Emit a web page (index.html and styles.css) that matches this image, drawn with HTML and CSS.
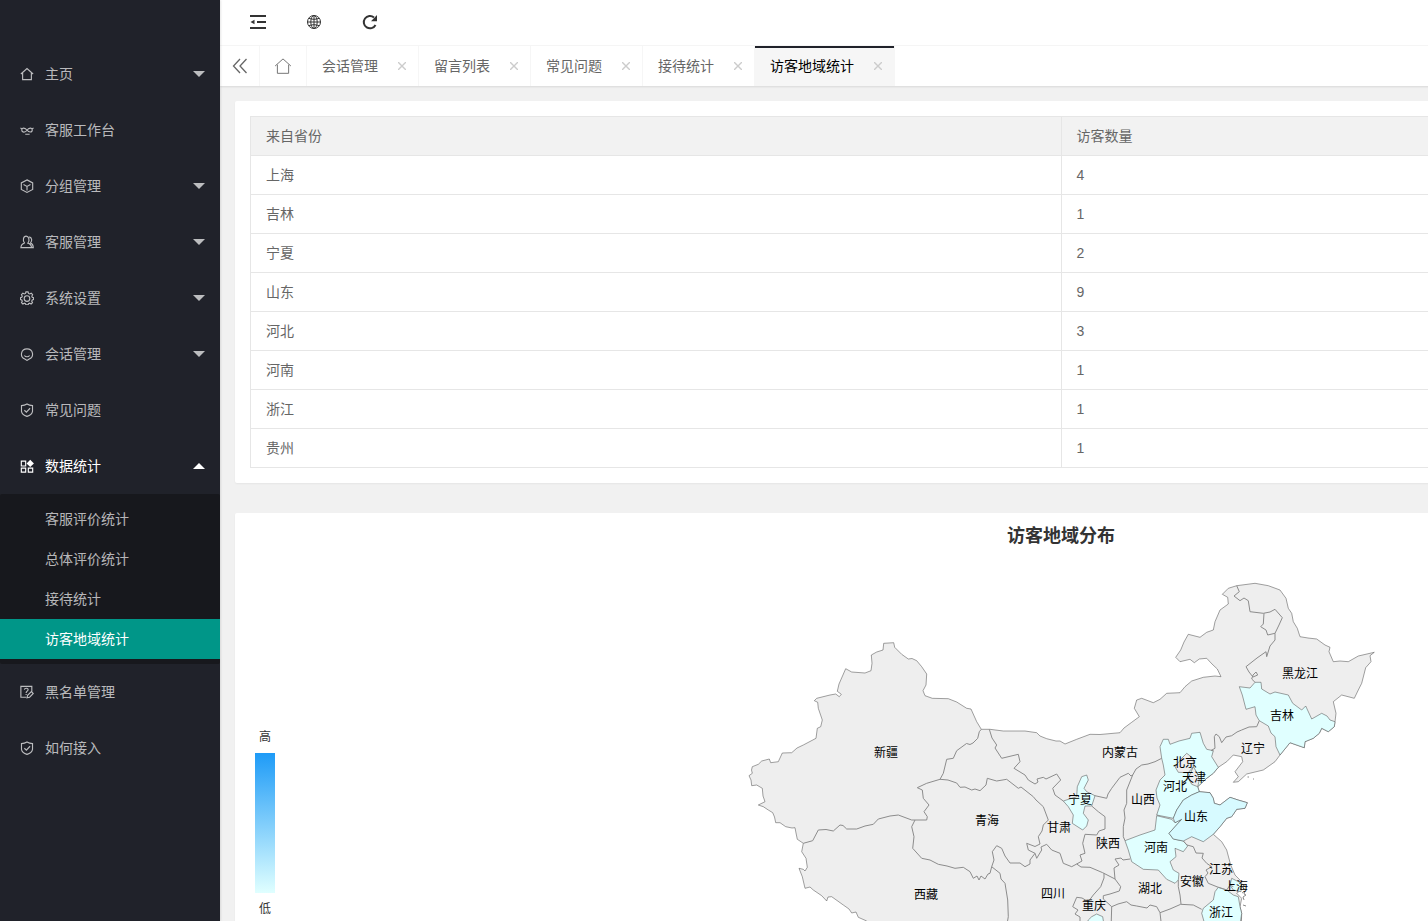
FILE: index.html
```html
<!DOCTYPE html>
<html lang="zh-CN">
<head>
<meta charset="utf-8">
<title>访客地域统计</title>
<link rel="stylesheet" href="styles.css">
</head>
<body>
<svg class="sprite" aria-hidden="true">
  <symbol id="i-home" viewBox="0 0 16 16"><path d="M1 8 8 1.700 15 8M3 6.800V14.500h10V6.800"/></symbol>
  <symbol id="i-mask" viewBox="0 0 16 16"><path d="M.5 5.800 2 6.500M15.500 5.800 14 6.500M8 8.300C6 5.300 2 5 2 8s4 3.300 6 .3c2-3 6-3.300 6-.3s-4 3-6 0M6 12.800h5"/></symbol>
  <symbol id="i-cube" viewBox="0 0 16 16"><path d="M8 1l6.500 3.500v7.500L8 15.300 1.500 12V4.500zM4 6.300 8 8.500l4-2.200M8 8.500v4.700"/></symbol>
  <symbol id="i-user" viewBox="0 0 16 16"><path d="M5.300 9.300C2.500 6 4 1.300 7 1.300s4.600 4.500 2 8c3 .8 4 2 4.200 5.200H1c.2-3.200 1.300-4.500 4.300-5.200M10.500 2.200c3.300.8 3.600 4.300 1.600 6.900 2.200.8 3 2.400 3.100 5.400h-2"/></symbol>
  <symbol id="i-gear" viewBox="0 0 16 16"><path d="M6.800 1h2.400l.5 1.800 1.400.6 1.700-.9 1.600 1.700-.9 1.700.5 1.300 1.500.5v2l-1.500.6-.6 1.300.9 1.700-1.600 1.500-1.600-.8-1.400.6-.5 1.300H6.800l-.5-1.300-1.400-.6-1.600.8-1.600-1.500.9-1.700L2 10.300.5 9.700v-2L2 7.200l.6-1.300-.9-1.700 1.600-1.700 1.600.9 1.400-.6z"/><circle cx="8" cy="8.600" r="3.200"/></symbol>
  <symbol id="i-chat" viewBox="0 0 16 16"><path d="M5.500 13.700C-.5 11.300.8 2.200 8 2.200s8.500 9 2.500 11.500L8 15.300zM5 9.700c1.500 2 4.500 2 6 0"/></symbol>
  <symbol id="i-shield" viewBox="0 0 16 16"><path d="M8 1.200c2 1.300 4 1.800 6.300 1.800v6.500c-.4 2.800-3.300 4.800-6.300 5.800-3-1-5.900-3-6.300-5.800V3C4 3 6 2.500 8 1.200zM5 8.300l2.300 2.200L11.500 6"/></symbol>
  <symbol id="i-apps" viewBox="0 0 16 16"><path d="M1.500 2.500h5V8h-5zM1.500 10.500h5V15h-5zM9.500 10.500h5V15h-5z"/><path class="solid" d="M11.700.8 15.900 5l-4.200 4.200L7.500 5z"/></symbol>
  <symbol id="i-note" viewBox="0 0 16 16"><path d="M7 14H1V1.500h12.500v6M5 5.200c.3-2 4.500-2 4.200.3C9 7 7 7 7 9M7 10.300v1.200M8 14.700l.7-3L13 7.500l2.200 2.200L11 14z"/></symbol>
</svg>
<div class="app">
  <nav class="side" aria-label="主导航">
    <ul class="menu">
      <li><a class="item" href="#"><svg class="ico"><use href="#i-home"/></svg><span>主页</span><i class="caret"></i></a></li>
      <li><a class="item" href="#"><svg class="ico"><use href="#i-mask"/></svg><span>客服工作台</span></a></li>
      <li><a class="item" href="#"><svg class="ico"><use href="#i-cube"/></svg><span>分组管理</span><i class="caret"></i></a></li>
      <li><a class="item" href="#"><svg class="ico"><use href="#i-user"/></svg><span>客服管理</span><i class="caret"></i></a></li>
      <li><a class="item" href="#"><svg class="ico"><use href="#i-gear"/></svg><span>系统设置</span><i class="caret"></i></a></li>
      <li><a class="item" href="#"><svg class="ico"><use href="#i-chat"/></svg><span>会话管理</span><i class="caret"></i></a></li>
      <li><a class="item" href="#"><svg class="ico"><use href="#i-shield"/></svg><span>常见问题</span></a></li>
      <li>
        <a class="item open" href="#"><svg class="ico"><use href="#i-apps"/></svg><span>数据统计</span><i class="caret up"></i></a>
        <ul class="submenu">
          <li><a class="subitem" href="#">客服评价统计</a></li>
          <li><a class="subitem" href="#">总体评价统计</a></li>
          <li><a class="subitem" href="#">接待统计</a></li>
          <li><a class="subitem current" href="#" aria-current="page">访客地域统计</a></li>
        </ul>
      </li>
      <li><a class="item" href="#"><svg class="ico"><use href="#i-note"/></svg><span>黑名单管理</span></a></li>
      <li><a class="item" href="#"><svg class="ico"><use href="#i-shield"/></svg><span>如何接入</span></a></li>
    </ul>
  </nav>
  <div class="main">
    <header class="toolbar">
      <button class="tool" type="button" aria-label="收起菜单"><svg class="tool-ico" viewBox="0 0 16 16"><path class="thick" d="M0 2h16M7 8h9M0 14h16"/><path class="solid" d="M4.500 5.700v4.600L.5 8z"/></svg></button>
      <button class="tool" type="button" aria-label="前台"><svg class="tool-ico" viewBox="0 0 16 16"><circle cx="8" cy="8" r="6.500"/><ellipse cx="8" cy="8" rx="3.200" ry="6.500"/><path d="M8 1.500v13M1.500 8h13M2.800 4.300c3 1.300 7.400 1.300 10.400 0M2.800 11.700c3-1.300 7.400-1.300 10.400 0"/></svg></button>
      <button class="tool" type="button" aria-label="刷新"><svg class="tool-ico" viewBox="0 0 16 16"><path class="thick" d="M13.500 11A6.200 6.200 0 1 1 12 3.400"/><path class="solid" d="M15 1v6.200H9z"/></svg></button>
    </header>
    <div class="tabs">
      <button class="tab-nav" type="button" aria-label="向左滚动"><svg class="tool-ico" viewBox="0 0 16 16"><path d="M8 1 1.500 8 8 15M14.500 1 8 8l6.500 7"/></svg></button>
      <a class="tab-home" href="#" aria-label="主页"><svg class="home-ico"><use href="#i-home"/></svg></a>
      <div class="tab"><a href="#">会话管理</a><button class="close" type="button" aria-label="关闭"><svg viewBox="0 0 8 8"><path d="M0 0l8 8M8 0 0 8"/></svg></button></div>
      <div class="tab"><a href="#">留言列表</a><button class="close" type="button" aria-label="关闭"><svg viewBox="0 0 8 8"><path d="M0 0l8 8M8 0 0 8"/></svg></button></div>
      <div class="tab"><a href="#">常见问题</a><button class="close" type="button" aria-label="关闭"><svg viewBox="0 0 8 8"><path d="M0 0l8 8M8 0 0 8"/></svg></button></div>
      <div class="tab"><a href="#">接待统计</a><button class="close" type="button" aria-label="关闭"><svg viewBox="0 0 8 8"><path d="M0 0l8 8M8 0 0 8"/></svg></button></div>
      <div class="tab active"><a href="#">访客地域统计</a><button class="close" type="button" aria-label="关闭"><svg viewBox="0 0 8 8"><path d="M0 0l8 8M8 0 0 8"/></svg></button></div>
    </div>
    <main class="content">
      <section class="card table-card">
        <table class="grid">
          <thead><tr><th scope="col">来自省份</th><th scope="col">访客数量</th></tr></thead>
          <tbody>
            <tr><td>上海</td><td>4</td></tr>
            <tr><td>吉林</td><td>1</td></tr>
            <tr><td>宁夏</td><td>2</td></tr>
            <tr><td>山东</td><td>9</td></tr>
            <tr><td>河北</td><td>3</td></tr>
            <tr><td>河南</td><td>1</td></tr>
            <tr><td>浙江</td><td>1</td></tr>
            <tr><td>贵州</td><td>1</td></tr>
          </tbody>
        </table>
      </section>
      <section class="card">
        <h2 class="chart-title">访客地域分布</h2>
        <div class="chart">
          <div class="legend"><span>高</span><div class="ramp"></div><span>低</span></div>
          <svg class="map" viewBox="285 559 1602 400" role="img" aria-label="访客地域分布地图">
            <path class="land" d="M803.3 843.3 797.300 839.300 796 833 795 827.700 792 828 785.700 826.700 780 822.700 775.700 822.700 774.500 817 772.700 812.700 768.300 810 763.300 806.700 758.300 805 765 801.700 763 796 762.300 788.300 756.700 785 751.700 785.700 751 780 749 775.700 752.300 773.300 751.500 770 752.300 766.700 758.300 764.300 761.700 761 769.300 759 770.700 762.700 778.300 761.700 782.300 753 791.700 752.700 797 748 803.300 745 816 738.300 817.300 728.300 820.700 726.700 822.300 720 818.300 708.300 817.700 702.300 814.300 700.700 816.700 698.300 830 695 835.700 694 839.300 696.700 841.300 694.300 837.300 691.300 839 684 845.700 668.700 851.700 672 865 673 871 670.700 872 663.300 871.300 655 876.700 652 883 650 883.700 643.300 893.700 642.700 894.700 647.300 901.700 654.300 908.300 659 912 658.500 916.700 660.700 921.700 666.700 926.700 674 926 685 923 690.700 925 695.700 932.300 698.300 948.300 698.700 956.700 702 966.700 708.300 971 709 976.700 721.700 981.300 729.300 990 729.300 1003.300 731 1025 731 1036.700 732.700 1040 736 1046.700 738.700 1056 741 1060 741 1065 744 1076.700 739.300 1090 734.300 1100 734.500 1120 732.700 1124 728 1131.700 722.300 1139.300 716.700 1134.300 708.300 1136.700 700 1141.700 698.300 1153.300 702.700 1160 699.300 1166.700 693.300 1180 692.700 1185 686.700 1191.700 681 1203.300 677.300 1215 676 1221 676.700 1217.300 669 1212 664 1206.700 658.300 1199.300 659 1194.300 662.700 1190 659.300 1180 661.700 1175.700 657.300 1180.700 650 1184 642 1188.300 634.300 1200 637.300 1206.700 632.300 1213.300 630 1215 621.700 1220 610 1228.300 604 1227.700 597.300 1222.300 594.300 1228.300 588.300 1236.700 585.700 1255 583.300 1268.300 585.700 1280 590 1286 598.300 1288.300 608.300 1291.700 613.300 1293.300 621.700 1297.300 628.300 1300 636.700 1308 638 1316.700 639 1325 645 1330 647.300 1329 651.700 1333.300 661.700 1340 661 1348.300 661.700 1358.300 656 1374.300 652.300 1370 655.700 1371 661.700 1365.700 667.700 1361.700 683.300 1358.300 690 1354.300 698.300 1341.700 695 1333.300 701.700 1336 713.300 1335 721.700 1334.300 726.700 1328.300 731.700 1321.700 728.300 1319.300 733.300 1313.300 738.300 1305 741.700 1304.300 747.700 1290 742.700 1280 755 1275 761.700 1263.300 770 1246.700 774 1238.300 781.700 1233.300 782.300 1238.300 776.700 1235 771.700 1242.700 761.700 1241.700 756.700 1233.300 755 1226.700 761.700 1218.300 767.300 1213.300 773.300 1206.700 778.300 1197.700 786.700 1199.300 791.700 1210 792.700 1213.300 798.300 1214.300 803.300 1220 805 1230 797.300 1238 800 1247.300 802.700 1245 808.300 1236.700 809.300 1231.700 816.700 1226.700 818.300 1220 826.700 1213.300 834.300 1221.700 841.700 1226.700 850 1230.700 865 1235 875 1241.700 881.700 1241 890 1236.700 893.300 1241.700 898.300 1240 906.700 1241.700 913.300 1240 960 900 960 866.700 921 858.300 917.300 856 912 851.700 913 849 909 843.300 905 831.700 896.700 828 897 826.700 901 821.700 895.700 813.300 890 810 887 805 888.300 802.300 876.700 799 868.300 803.300 869.300 805 871 807.300 867.300 806 858.300 801.700 851.700Z"/>
            <g class="tint">
              <path d="M1239.3 686.700 1250 688 1255 682.300 1261 682.300 1261.700 689 1270 694 1275 692 1288.300 695 1292.700 703.300 1301.700 710 1305.700 706 1311.700 719 1321.700 713.300 1327 716 1330 720 1335 721.700 1334.300 726.700 1328.300 731.700 1321.700 728.300 1319.300 733.300 1313.300 738.300 1305 741.700 1304.300 747.700 1290 742.700 1280 755 1276 746.700 1275 736.700 1271 733 1268.300 726 1259.300 720.700 1256 715 1255 706.700 1246 709.300 1242.300 695Z"/>
              <path d="M1063.3 801 1076.700 796.700 1077.300 786.700 1081.700 776.700 1086.700 775 1088.300 780 1084 788.300 1086.700 791.700 1095 795.700 1091.700 806 1085 806 1083.300 813.300 1088.300 820 1086.700 826 1082.700 830 1072.300 823.300 1073.300 815 1068.300 806.700Z"/>
              <path d="M1161.7 758.300 1160 746.700 1163.300 739.300 1168.300 739.300 1170 744.300 1179 741 1190 738.300 1191.700 733.300 1200 732.300 1203.300 743.300 1206.700 749.300 1213.300 750.700 1211.700 756.700 1218.300 767.300 1213.300 773.300 1206.700 778.300 1197.700 786.700 1199.300 791.700 1191.700 795 1183.300 800 1176.700 810 1173.300 818.300 1156.700 815 1160 805 1157 798 1156 790 1160 780 1165 775 1163.300 765Z"/>
              <path d="M1156.7 815.700 1171.700 819.300 1175 822.700 1181.700 819.300 1169 833.300 1173.300 839 1183.300 841 1187.700 846 1183.300 851.700 1175 848.300 1176 856.700 1170 861.700 1173.300 870 1179 873.300 1178.300 880 1175 883.300 1166.700 879.300 1158.300 870 1143.300 869.300 1131.700 861.700 1128.300 850 1125 840.700 1140 835 1155 830Z"/>
              <path d="M1218.3 887.300 1226.700 890 1233.300 895 1238.300 896.700 1240 906.700 1241.700 913.300 1240 925 1205 925 1201.700 913.300 1203.300 908.300 1213.300 900 1215 891.700Z"/>
              <path d="M1231.7 878.300 1237 881 1241.700 883.300 1241 891.700 1233.300 890 1230 885Z"/>
              <path d="M1086 925 1088.300 920 1091.700 916.700 1096.700 914 1102.700 916.700 1104 925Z"/>
              <path class="strong" d="M1173.3 818.300 1176.700 810 1183.300 800 1191.700 795 1199.300 791.700 1210 792.700 1213.300 798.300 1214.300 803.300 1220 805 1230 797.300 1238 800 1247.300 802.700 1245 808.300 1236.700 809.300 1231.700 816.700 1226.700 818.300 1220 826.700 1213.300 834.300 1203.300 841.700 1191.700 836.700 1183.300 841 1173.300 839 1169 833.300 1181.700 819.300 1175 822.700Z"/>
            </g>
            <path class="land" d="M1175 766.700 1181.700 758.300 1186.700 753.300 1193.300 758.300 1193.300 766.700 1188.300 772.700 1178.300 772.300ZM1193.300 766.700 1197.300 773.300 1199.300 780 1197.700 786.700 1191.700 784.300 1188.300 778.300 1191 772Z"/>
            <g class="border">
              <path d="M981.3 729.300 979.300 731.700 977.700 738.300 973 743 970 744.500 966.500 743.500 956.700 750.700 953.300 758.300 946.700 759.300 943.300 773.300 940 779.300 926.700 783.300 917.300 787.700 922.300 790 923.300 798.300 929 805 924 811.700 927.300 816.700 926.700 820 911.700 820 898.300 815 890 816 878.300 819 873.300 824.300 865 826 856.700 829 846.700 829 843 825.500 840 825 833.300 831 826 829.500 818.300 830 812.700 840.700 803.300 843.300"/>
              <path d="M915 820 911.700 826.700 914 836.700 912.700 848.300 921.700 858.300 930 860 938.300 864.300 947 866 955 868.300 963.300 867.300 970 871.700 973.300 878.300 977 876 979 880 981 876 985 879 988 874 990 873.300 991.700 866.700"/>
              <path d="M940 779.300 948 780 956.700 783 960 787.300 965 787 971.700 790 975 789 980 790.700 986 785 987.300 778.300 996.700 781 1006.700 779.300 1018.300 788.300 1021 787 1033.300 796.700 1036 800 1043.300 806.700 1048.300 820 1043.300 825 1042 831 1038.300 836.700 1040 844 1035 846.500 1026.700 843.300 1028.300 850 1035 853.300 1030 860 1030 864 1025 866.700 1020 863 1010 863 1005 856 1001.700 848.300 996.700 845.700 992.300 851.700 994 860 991.700 866.700 1000 873.300 1001 879 1005 883.300 1007.700 900 1008.300 916.700 1006 930"/>
              <path d="M1035 853.300 1036.700 858.300 1041.700 850 1041 847 1046.700 844.300 1051.700 850 1060 853.300 1063.300 863.300 1071.700 866.700 1076.700 864 1082 861 1080 855 1085 853.300 1082.700 843.300 1085 834.300 1096.700 835 1099 831 1105 829 1105 816.700 1098.300 811.700 1091.700 806"/>
              <path d="M1076.700 864 1081 867 1090 867.300 1102.700 872.700 1115 879 1120.700 886.700 1119.300 891 1110 894 1103.300 895.700 1103.300 899 1111.700 906.700 1111 930"/>
              <path d="M1104 873.300 1104 878 1100.700 886.700 1093.300 895 1088.300 901.700 1082 898 1076.700 897.300 1072.700 906.700 1078 910 1075 914 1080 917 1080 930M1130 859 1123 860 1121 858 1115 859 1119 865 1114 868 1115 879"/>
              <path d="M989.3 729.300 992 738 996.700 745 995 748 1001.700 758.300 1018.300 754.300 1020 761.700 1014 768.300 1025 775 1028.300 780 1035 784 1038 782 1037 779 1043.300 777.300 1046 779 1056.700 774 1060.700 780 1052.700 788.300 1055 795 1063.300 801"/>
              <path d="M1095 795.700 1106.700 798.300 1108 794 1111.700 788.300 1120 777.300 1128.300 773.300 1131 776 1132.700 775 1126.700 790 1126.700 803.300 1124 810 1125 818 1123.300 826.700 1123.300 836.700 1125 840.700"/>
              <path d="M1132.700 775 1136 769 1141.700 765 1148 764 1155 761.700 1161.700 758.300M1178.300 880 1178.300 886.700 1180 895 1181 904M1111.700 906.700 1118 904 1126.700 901.700 1131 905 1136.700 906 1147 908 1150 905 1156.700 906.700 1160 912.700 1170 909 1180.700 904.300 1193.300 905 1201.700 909.300M1160 912.700 1162 930"/>
              <path d="M1183.300 841 1187 845 1193.300 846.700 1196 853 1203.300 853.300 1202 858 1206.700 863.300 1211.700 866.700 1206 870 1208 873 1205 876.700 1208.300 883.300 1218.300 887.300 1226.700 890 1230 885 1233.300 886.700"/>
              <path d="M1259.300 720.700 1256.700 726.700 1249 727 1241.700 730 1237 732 1231.700 735.700 1226 737 1221.700 742.700 1219.300 736.700 1216 734 1214.300 736.700 1215 748.300 1211 750.500 1213.300 750.700"/>
              <path d="M1236.700 585.700 1239.300 591.700 1234 596 1240 600.700 1244 598 1248.300 600.700 1250 611.700 1263.300 613.300 1270 612 1275 609.300 1282.300 617.700 1279 625 1275 633.300 1275 640 1270 646 1266.700 656.700 1266 651.700 1257 658 1246 666.700 1249 672 1253 677 1257.700 675 1256 672 1253 675 1251.700 679 1255 682.300M1264 613.300 1263.300 624 1260.700 626.700 1266 630 1267.700 635 1275 633.300"/>
              <path d="M1247.500 777h1.500M1253 779h1M1242 893l3-2-1 3 2 1-3 2 1 3M1243 905l3 1"/>
            </g>
            <g class="labels">
              <text x="886" y="757">新疆</text><text x="926" y="899">西藏</text><text x="987" y="825">青海</text><text x="1059" y="832">甘肃</text>
              <text x="1080" y="804">宁夏</text><text x="1120" y="757">内蒙古</text><text x="1300" y="678">黑龙江</text><text x="1282" y="720">吉林</text>
              <text x="1253" y="753">辽宁</text><text x="1185" y="767">北京</text><text x="1194" y="782">天津</text><text x="1175" y="791">河北</text>
              <text x="1143" y="804">山西</text><text x="1196" y="821">山东</text><text x="1108" y="848">陕西</text><text x="1156" y="852">河南</text>
              <text x="1053" y="898">四川</text><text x="1094" y="910">重庆</text><text x="1150" y="893">湖北</text><text x="1192" y="886">安徽</text>
              <text x="1221" y="874">江苏</text><text x="1236" y="891">上海</text><text x="1221" y="917">浙江</text>
            </g>
          </svg>
        </div>
      </section>
    </main>
  </div>
</div>
</body>
</html>
```
FILE: styles.css
```css
* { box-sizing: border-box; }
body {
  margin: 0;
  font: 14px/24px "Liberation Sans", "Noto Sans CJK SC", sans-serif;
  color: #666;
  background: #f1f1f1;
}
a { color: inherit; text-decoration: none; }
ul { list-style: none; margin: 0; padding: 0; }
button { border: 0; padding: 0; background: none; color: inherit; cursor: pointer; }
svg { display: block; fill: none; stroke: currentColor; }
.solid { fill: currentColor; stroke: none; }
.thick { stroke-width: 2; }
.sprite { position: absolute; width: 0; height: 0; }

.app { display: flex; height: 100vh; overflow: hidden; }

.side {
  position: relative;
  z-index: 1;
  flex: 0 0 220px;
  padding-top: 46px;
  background: #20222a;
  color: rgba(255, 255, 255, .7);
  box-shadow: 1px 0 2px rgba(0, 0, 0, .1);
}
.item { display: flex; align-items: center; height: 56px; padding: 0 15px 0 20px; }
.item.open { color: #fff; }
.ico { width: 14px; height: 14px; margin-right: 11px; stroke-width: 1.3; }
.caret {
  margin-left: auto;
  border: 6px solid transparent;
  border-top-color: currentColor;
  border-bottom: 0;
}
.caret.up { border-top: 0; border-bottom: 6px solid currentColor; }
.submenu { padding: 5px 0; background: #17181d; border-radius: 2px; }
.subitem { display: block; padding-left: 45px; line-height: 40px; }
.subitem.current { background: #009688; color: #fff; }

.main { flex: 1 0 0; min-width: 1682px; }
.toolbar {
  display: flex;
  height: 46px;
  padding: 0 10px 2px;
  background: #fff;
  border-bottom: 1px solid #f6f6f6;
  color: #333;
}
.tool { display: grid; place-items: center; width: 56px; }
.tool-ico { width: 16px; height: 16px; }
.tabs {
  position: relative;
  display: flex;
  height: 40px;
  background: #fff;
  box-shadow: 0 1px 2px rgba(0, 0, 0, .1);
}
.tab-nav, .tab-home { display: grid; place-items: center; width: 40px; border-right: 1px solid #f6f6f6; }
.tab-nav { stroke-width: 1.3; }
.tab-home { width: 47px; }
.home-ico { width: 18px; height: 18px; stroke-width: .8; }
.tab {
  display: flex;
  align-items: center;
  gap: 16px;
  padding: 0 8px 0 15px;
  border-right: 1px solid #f6f6f6;
}
.tab.active {
  background: linear-gradient(#20222a, #20222a) top / 100% 2px no-repeat #f6f6f6;
  color: #000;
}
.close { display: grid; place-items: center; width: 16px; height: 16px; color: #ccc; }
.close svg { width: 8px; height: 8px; stroke-width: 1.4; }

.content { display: grid; grid-template-columns: minmax(0, 1fr); gap: 30px; padding: 15px; }
.card { background: #fff; border-radius: 2px; box-shadow: 0 1px 2px rgba(0, 0, 0, .05); }
.table-card { padding: 15px; }
.grid { width: 100%; table-layout: fixed; border-collapse: collapse; }
.grid th, .grid td {
  height: 39px;
  padding: 0 15px;
  border: 1px solid #e6e6e6;
  text-align: left;
  font-weight: 400;
  line-height: 20px;
}
.grid th { background: #f2f2f2; }

.chart-title { margin: 0; padding: 11px 0; color: #333; font-size: 18px; line-height: 24px; text-align: center; }
.chart { display: flex; }
.legend {
  display: flex;
  flex: none;
  flex-direction: column;
  justify-content: flex-end;
  gap: 8px;
  width: 50px;
  height: 358px;
  padding-left: 20px;
  color: #333;
  font-size: 12px;
  line-height: 16px;
}
.legend span { width: 20px; text-align: center; }
.ramp { width: 20px; height: 140px; background: linear-gradient(#1e9bf7, #e0ffff); }
.map { flex: 1; min-width: 0; stroke: #444; stroke-width: .5; stroke-linejoin: round; }
.land { fill: #eee; }
.tint { fill: #e0ffff; }
.tint .strong { fill: #d7faff; }
.border { stroke: #8c8c8c; stroke-width: 1; }
.labels { fill: #000; stroke: none; font-size: 12px; text-anchor: middle; }
```
